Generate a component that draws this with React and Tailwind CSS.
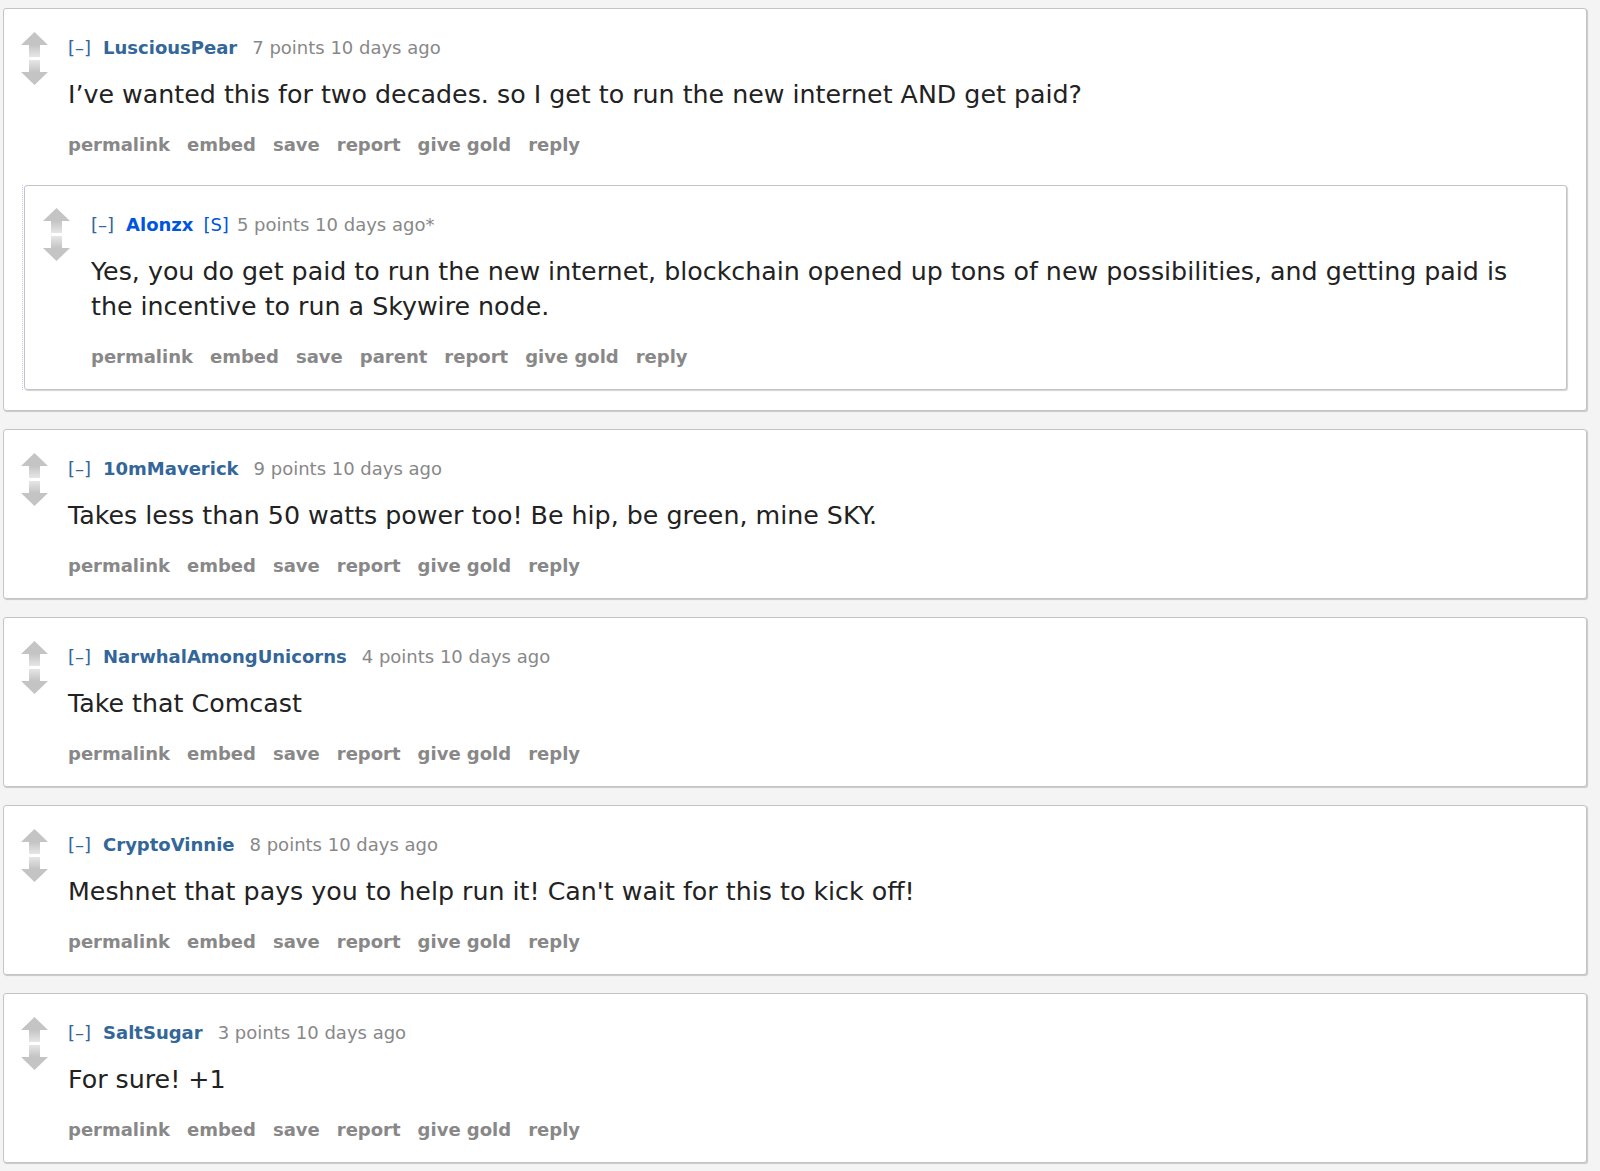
const comments = [
  {
    author: "LusciousPear",
    points: 7,
    body: ["I’ve wanted this for two decades. so I get to run the new internet AND get paid?"],
    child: {
      author: "Alonzx",
      submitter: true,
      points: 5,
      edited: true,
      parent: true,
      body: [
        "Yes, you do get paid to run the new internet, blockchain opened up tons of new possibilities, and getting paid is",
        "the incentive to run a Skywire node.",
      ],
    },
  },
  {
    author: "10mMaverick",
    points: 9,
    body: ["Takes less than 50 watts power too! Be hip, be green, mine SKY."],
  },
  { author: "NarwhalAmongUnicorns", points: 4, body: ["Take that Comcast"] },
  {
    author: "CryptoVinnie",
    points: 8,
    body: ["Meshnet that pays you to help run it! Can't wait for this to kick off!"],
  },
  { author: "SaltSugar", points: 3, body: ["For sure! +1"] },
];

function Arrows({ className }) {
  return (
    <div className={"flex w-[27px] shrink-0 flex-col gap-[3px] " + className}>
      <svg width="27" height="25" viewBox="0 0 27 25">
        <defs>
          <linearGradient id="upStem" x1="0" y1="0" x2="0" y2="1">
            <stop offset="0" stopColor="#c4c4c4" />
            <stop offset="1" stopColor="#e6e6e6" />
          </linearGradient>
        </defs>
        <polygon points="13.5,0 27,13 0,13" fill="#c4c4c4" />
        <rect x="8" y="13" width="11" height="12" fill="url(#upStem)" />
      </svg>
      <svg width="27" height="25" viewBox="0 0 27 25">
        <defs>
          <linearGradient id="downStem" x1="0" y1="0" x2="0" y2="1">
            <stop offset="0" stopColor="#e6e6e6" />
            <stop offset="1" stopColor="#c4c4c4" />
          </linearGradient>
        </defs>
        <rect x="8" y="0" width="11" height="12" fill="url(#downStem)" />
        <polygon points="0,12 27,12 13.5,25" fill="#c4c4c4" />
      </svg>
    </div>
  );
}

function Entry({ c }) {
  const buttons = ["permalink", "embed", "save"];
  if (c.parent) buttons.push("parent");
  buttons.push("report", "give gold", "reply");

  return (
    <div className="min-w-0 flex-1">
      <p className="flex items-baseline text-[18px] leading-[22px] text-[#888]">
        <span className="mr-[12px] text-[#369]">[–]</span>
        <span
          className={
            "font-bold " +
            (c.submitter ? "mr-[10px] text-[#0055df]" : "mr-[15px] text-[#369]")
          }
        >
          {c.author}
        </span>
        {c.submitter && <span className="mr-[8px] text-[#0055df]">[S]</span>}
        <span>
          {c.points} points 10 days ago{c.edited ? "*" : ""}
        </span>
      </p>
      <div className="mt-[18px] text-[25.3px] leading-[35px] text-[#222]">
        {c.body.map((line, i) => (
          <p key={i}>{line}</p>
        ))}
      </div>
      <ul className="mt-[22px] flex gap-[17px] text-[18px] font-bold leading-[22px] text-[#888]">
        {buttons.map((b) => (
          <li key={b}>{b}</li>
        ))}
      </ul>
    </div>
  );
}

export default function App() {
  return (
    <div className="min-h-screen bg-[#f4f4f4] pt-[8px] pb-[8px] font-['DejaVu_Sans',Verdana,sans-serif]">
      <div className="flex flex-col gap-[18px]">
        {comments.map((c) => (
          <div
            key={c.author}
            className="ml-[3px] w-[1584px] rounded-[3px] border border-[#c4c4c4] bg-white shadow-[1px_1px_1px_rgba(0,0,0,0.18)]"
          >
            <div className={"flex " + (c.child ? "" : "pb-[21px]")}>
              <Arrows className="ml-[17px] mt-[23px]" />
              <div className="ml-[20px] flex-1 pt-[28px]">
                <Entry c={c} />
              </div>
            </div>
            {c.child && (
              <div className="mb-[20px] ml-[18px] mr-[19px] mt-[29px] border-l border-dotted border-[#c8c8ff] pl-px">
                <div className="flex rounded-[3px] border border-[#c4c4c4] bg-white pb-[21px] shadow-[1px_1px_1px_rgba(0,0,0,0.18)]">
                  <Arrows className="ml-[18px] mt-[22px]" />
                  <div className="ml-[21px] flex-1 pt-[28px]">
                    <Entry c={c.child} />
                  </div>
                </div>
              </div>
            )}
          </div>
        ))}
      </div>
    </div>
  );
}
